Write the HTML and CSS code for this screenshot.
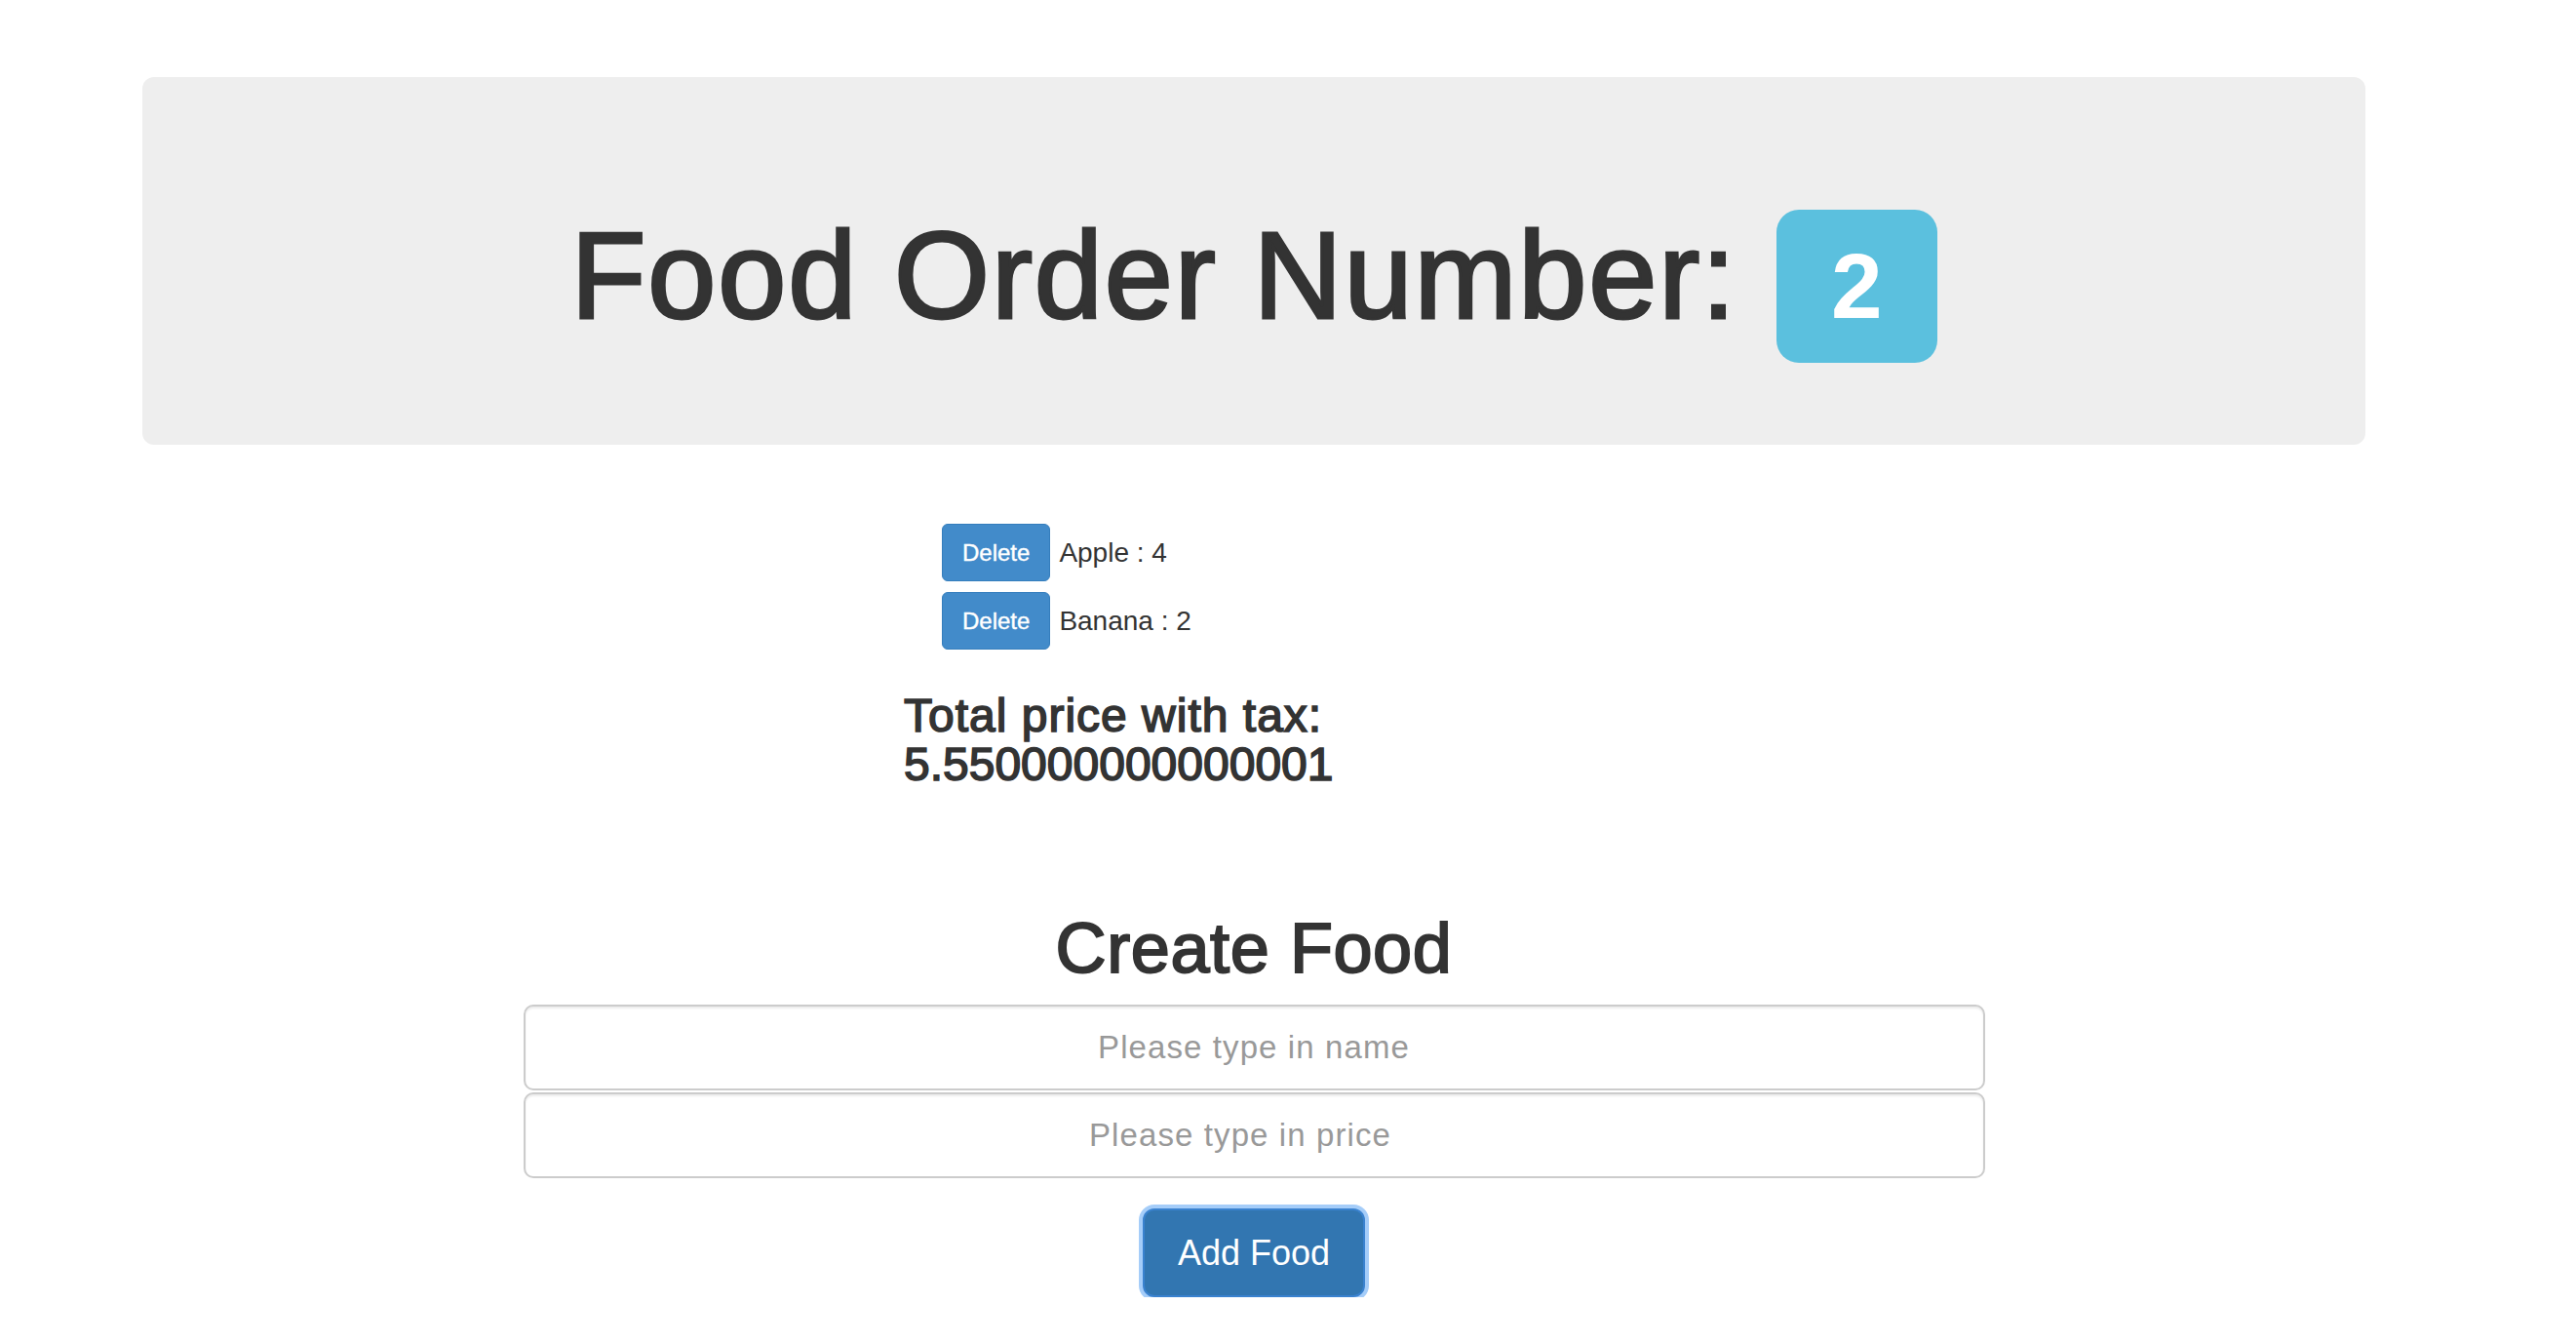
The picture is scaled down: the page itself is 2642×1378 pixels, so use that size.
FILE: index.html
```html
<!DOCTYPE html>
<html lang="en">
<head>
<meta charset="utf-8">
<title>Food Order</title>
<link rel="stylesheet" href="styles.css">
</head>
<body>
<div class="page">
  <div class="jumbotron">
    <h1 class="order-title"><span class="order-text">Food Order Number:</span><span class="label-info">2</span></h1>
  </div>

  <div class="orders">
    <ul class="order-list">
      <li class="order-item"><button class="btn-delete" type="button">Delete</button><span class="item-text">Apple : 4</span></li>
      <li class="order-item"><button class="btn-delete" type="button">Delete</button><span class="item-text">Banana : 2</span></li>
    </ul>
    <h3 class="total"><span class="total-label">Total price with tax:</span> 5.550000000000001</h3>
  </div>

  <div class="create">
    <h1 class="create-title">Create Food</h1>
    <input class="field" type="text" placeholder="Please type in name">
    <input class="field field-price" type="text" placeholder="Please type in price">
    <div class="actions">
      <button class="btn-add" type="button">Add Food</button>
    </div>
  </div>
</div>
</body>
</html>
```

FILE: styles.css
```css
html, body {
  margin: 0;
  padding: 0;
  background: #ffffff;
}

body {
  font-family: "Liberation Sans", Arial, Helvetica, sans-serif;
  color: #333333;
}

.page {
  width: 2280px;
  margin-left: 146px;
  padding-top: 79px;
}

/* Jumbotron */
.jumbotron {
  background: #eeeeee;
  border-radius: 12px;
  padding: 135px 0 84px;
}

.order-title {
  margin: 0;
  display: flex;
  justify-content: center;
  align-items: baseline;
  font-size: 126px;
  line-height: 1.1;
  font-weight: normal;
  color: #333333;
  -webkit-text-stroke: 3px #333333;
}

.order-text {
  letter-spacing: 1.9px;
}

.label-info {
  display: inline-block;
  margin-left: 40px;
  background: #5bc0de;
  color: #ffffff;
  -webkit-text-stroke: 0;
  font-size: 94.5px;
  font-weight: bold;
  line-height: 1;
  padding: 31px 56px 31.5px;
  border-radius: 23px;
}

/* Order list */
.orders {
  padding-left: 781px;
  margin-top: 81px;
}

.order-list {
  list-style: none;
  margin: 0;
  padding: 0 0 0 39px;
}

.order-item {
  display: flex;
  align-items: center;
  gap: 9px;
  margin-bottom: 11px;
}

.order-item:last-child {
  margin-bottom: 0;
}

.btn-delete {
  font-family: inherit;
  font-size: 24px;
  line-height: 37px;
  padding: 10px 20px;
  color: #ffffff;
  background: #428bca;
  border: 1px solid #357ebd;
  border-radius: 6px;
  -webkit-text-stroke: 0.4px #ffffff;
}

.item-text {
  font-size: 28px;
  color: #333333;
}

.total {
  margin: 43px 0 0;
  max-width: 460px;
  font-size: 48px;
  line-height: 50px;
  font-weight: normal;
  color: #333333;
  -webkit-text-stroke: 1.6px #333333;
}

.total-label {
  letter-spacing: 1px;
}

/* Create food */
.create {
  margin-top: 123px;
  display: flex;
  flex-direction: column;
  align-items: center;
}

.create-title {
  margin: 0 0 18px;
  font-size: 72px;
  line-height: 80px;
  font-weight: normal;
  letter-spacing: 0.6px;
  color: #333333;
  -webkit-text-stroke: 2px #333333;
}

.field {
  box-sizing: border-box;
  width: 1499px;
  height: 88px;
  margin: 0 0 2px;
  padding: 0 24px;
  font-family: inherit;
  font-size: 33px;
  letter-spacing: 1.1px;
  text-align: center;
  color: #555555;
  background: #ffffff;
  border: 2px solid #cccccc;
  border-radius: 10px;
  box-shadow: inset 0 2px 2px rgba(0, 0, 0, 0.075);
  outline: none;
}

.field::placeholder {
  color: #999999;
}

.field-price {
  padding-right: 52px;
}

.actions {
  margin-top: 29px;
}

.btn-add {
  font-family: inherit;
  font-size: 36px;
  line-height: 47px;
  padding: 20px 34px;
  color: #ffffff;
  background: #3276b1;
  border: 2px solid #3a82cf;
  border-radius: 12px;
  box-shadow: 0 0 0 4px #a5cdf9;
}
```
